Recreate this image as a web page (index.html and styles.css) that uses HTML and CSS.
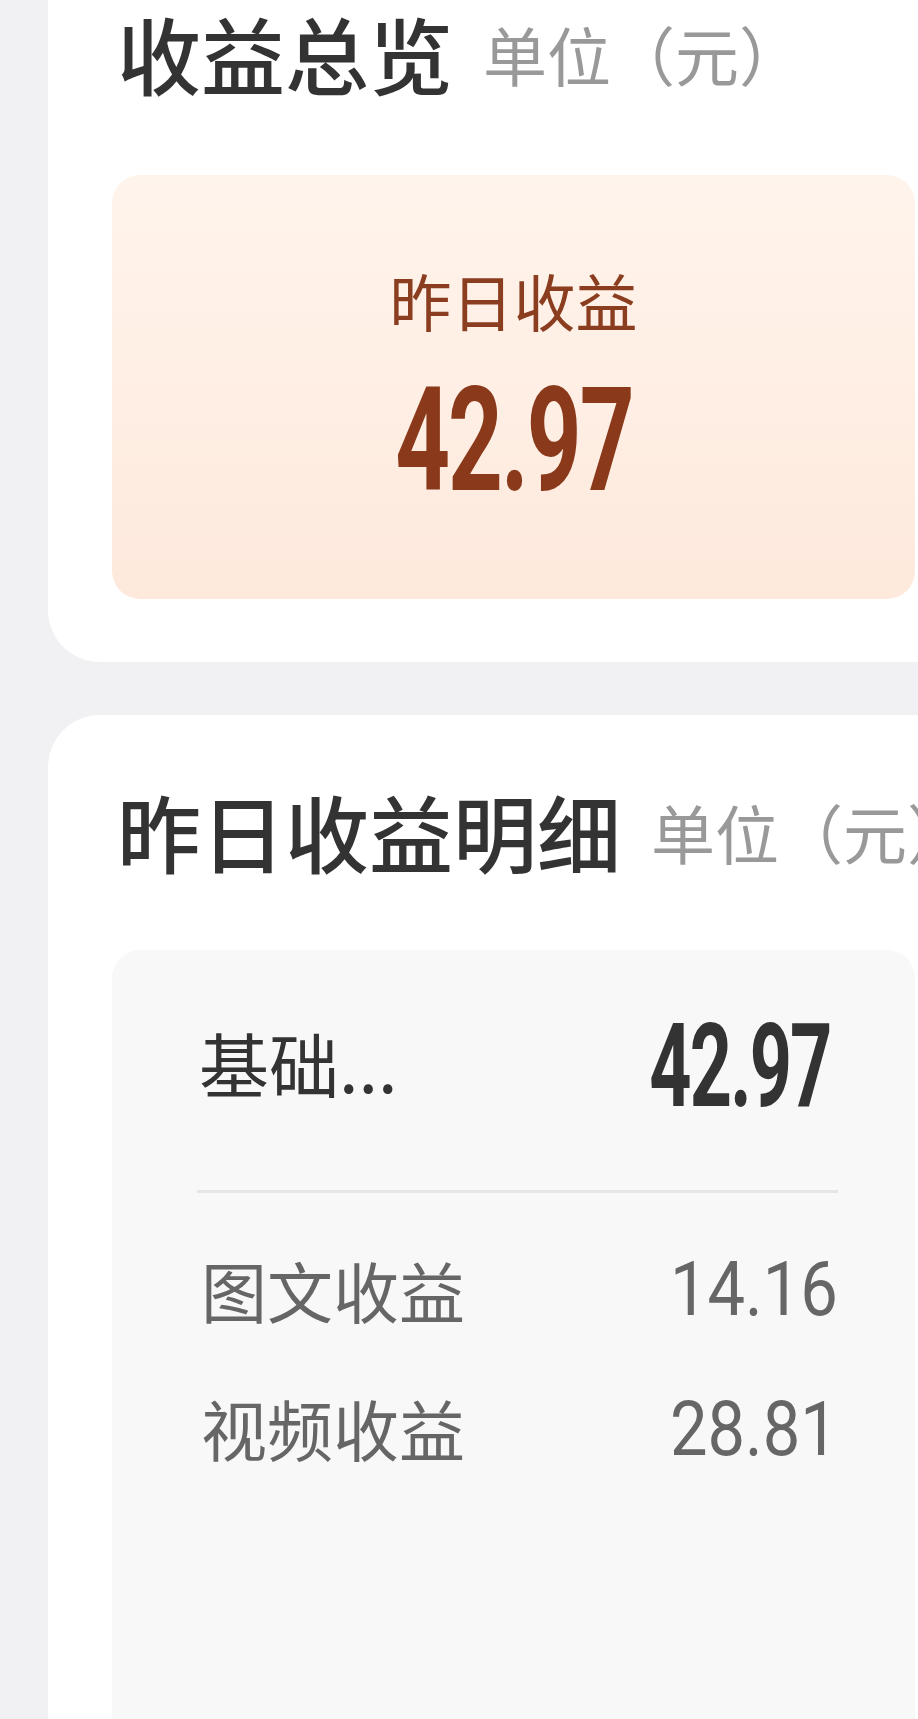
FILE: index.html
```html
<!DOCTYPE html>
<html lang="zh-CN">
<head>
<meta charset="utf-8">
<title>收益总览</title>
<link rel="stylesheet" href="styles.css">
</head>
<body>
<div class="page">
  <section class="card card-first">
    <div class="card-head">
      <h2 class="card-title">收益总览</h2>
      <span class="card-unit">单位（元）</span>
    </div>
    <div class="summary">
      <div class="summary-label">昨日收益</div>
      <div class="summary-value"><span class="cond">42.97</span></div>
    </div>
  </section>

  <section class="card card-second">
    <div class="card-head card-head-2">
      <h2 class="card-title">昨日收益明细</h2>
      <span class="card-unit">单位（元）</span>
    </div>
    <div class="detail">
      <div class="detail-col">
        <div class="row row-main">
          <span class="row-name-main">基础...</span>
          <span class="row-value-main"><span class="cond-dark">42.97</span></span>
        </div>
        <div class="divider"></div>
        <div class="row row-sub">
          <span class="row-name">图文收益</span>
          <span class="row-value"><span class="num">14.16</span></span>
        </div>
        <div class="row row-sub row-sub-2">
          <span class="row-name">视频收益</span>
          <span class="row-value"><span class="num">28.81</span></span>
        </div>
      </div>
    </div>
  </section>
</div>
</body>
</html>
```

FILE: styles.css
```css
html, body {
  margin: 0;
  padding: 0;
}
body {
  background: #f1f1f3;
  overflow: hidden;
  font-family: "Noto Sans CJK SC", "Noto Sans", sans-serif;
  height: 1719px;
}
.page {
  padding-left: 48px;
  width: 1100px;
}
.card {
  width: 931px;
  box-sizing: border-box;
  background: #ffffff;
  border-radius: 52px;
  padding: 66px 64px 63px 64px;
}
.card-first {
  margin-top: -63px;
}
.card-second {
  margin-top: 53px;
  padding-bottom: 0;
  height: 1200px;
}
.card-head {
  display: flex;
  align-items: center;
  height: 100px;
  padding-left: 5px;
  white-space: nowrap;
}
.card-title {
  margin: 0;
  flex-shrink: 0;
  font-size: 84px;
  line-height: 100px;
  font-weight: 500;
  color: #333333;
  white-space: nowrap;
}
.card-unit {
  flex-shrink: 0;
  margin-left: 30px;
  font-size: 64px;
  line-height: 100px;
  color: #999999;
  white-space: nowrap;
}
.summary {
  margin-top: 72px;
  height: 424px;
  box-sizing: border-box;
  border-radius: 28px;
  background: linear-gradient(180deg, #fff4ec 0%, #fee9dc 100%);
  display: flex;
  flex-direction: column;
  align-items: center;
  padding-top: 85px;
}
.summary-label {
  font-size: 62px;
  line-height: 80px;
  color: #8b3d1f;
}
.summary-value {
  margin-top: 30px;
  height: 140px;
  line-height: 140px;
}
.cond {
  display: inline-block;
  font-family: "Roboto", "Liberation Sans", sans-serif;
  font-weight: 700;
  font-size: 145px;
  line-height: 140px;
  color: #8a391b;
  transform: scaleX(0.66);
  transform-origin: center;
  letter-spacing: -3px;
}
.detail {
  margin-top: 69px;
  height: 900px;
  background: #f8f8f8;
  border-radius: 28px;
  padding-left: 85px;
  padding-top: 63px;
}
.detail-col {
  width: 641px;
}
.row {
  display: flex;
  align-items: center;
  justify-content: space-between;
}
.row-main {
  height: 100px;
}
.row-name-main {
  font-size: 70px;
  line-height: 100px;
  color: #333333;
  padding-left: 2px;
}
.row-value-main {
  margin-top: 38px;
  margin-right: 8px;
  line-height: 100px;
}
.cond-dark {
  display: inline-block;
  font-family: "Roboto", "Liberation Sans", sans-serif;
  font-weight: 700;
  font-size: 117px;
  line-height: 100px;
  color: #333333;
  transform: scaleX(0.63);
  transform-origin: right center;
  letter-spacing: -3px;
}
.divider {
  margin-top: 77px;
  height: 3px;
  background: #e6e6e6;
}
.row-sub {
  height: 80px;
  margin-top: 56px;
}
.row-sub-2 {
  margin-top: 58px;
}
.row-name {
  font-size: 66px;
  line-height: 80px;
  color: #666666;
  padding-left: 4px;
}
.row-value {
  margin-top: 18px;
  line-height: 80px;
}
.row-sub-2 .row-value {
  margin-top: 22px;
}
.num {
  display: inline-block;
  font-family: "Roboto", "Liberation Sans", sans-serif;
  font-size: 76px;
  line-height: 80px;
  color: #666666;
  transform: scaleX(0.88);
  transform-origin: right center;
}
```
